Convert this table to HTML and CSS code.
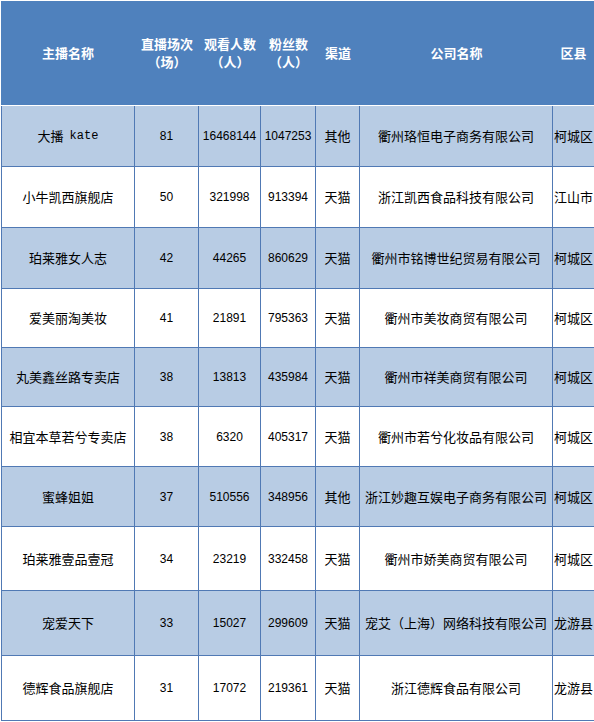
FILE: index.html
```html
<!DOCTYPE html>
<html lang="zh">
<head>
<meta charset="utf-8">
<title>主播榜单</title>
<link rel="stylesheet" href="styles.css">
</head>
<body>
<div class="sheet">
  <div class="row head">
    <div class="cell">主播名称</div>
    <div class="cell">直播场次<br>（场）</div>
    <div class="cell">观看人数<br>（人）</div>
    <div class="cell">粉丝数<br>（人）</div>
    <div class="cell">渠道</div>
    <div class="cell">公司名称</div>
    <div class="cell">区县</div>
  </div>
  <div class="row band h61">
    <div class="cell">大播<span class="latin">kate</span></div>
    <div class="cell num">81</div>
    <div class="cell num">16468144</div>
    <div class="cell num">1047253</div>
    <div class="cell">其他</div>
    <div class="cell">衢州珞恒电子商务有限公司</div>
    <div class="cell">柯城区</div>
  </div>
  <div class="row h61">
    <div class="cell">小牛凯西旗舰店</div>
    <div class="cell num">50</div>
    <div class="cell num">321998</div>
    <div class="cell num">913394</div>
    <div class="cell">天猫</div>
    <div class="cell">浙江凯西食品科技有限公司</div>
    <div class="cell">江山市</div>
  </div>
  <div class="row band h61">
    <div class="cell">珀莱雅女人志</div>
    <div class="cell num">42</div>
    <div class="cell num">44265</div>
    <div class="cell num">860629</div>
    <div class="cell">天猫</div>
    <div class="cell">衢州市铭博世纪贸易有限公司</div>
    <div class="cell">柯城区</div>
  </div>
  <div class="row h59">
    <div class="cell">爱美丽淘美妆</div>
    <div class="cell num">41</div>
    <div class="cell num">21891</div>
    <div class="cell num">795363</div>
    <div class="cell">天猫</div>
    <div class="cell">衢州市美妆商贸有限公司</div>
    <div class="cell">柯城区</div>
  </div>
  <div class="row band h59">
    <div class="cell">丸美鑫丝路专卖店</div>
    <div class="cell num">38</div>
    <div class="cell num">13813</div>
    <div class="cell num">435984</div>
    <div class="cell">天猫</div>
    <div class="cell">衢州市祥美商贸有限公司</div>
    <div class="cell">柯城区</div>
  </div>
  <div class="row h60">
    <div class="cell">相宜本草若兮专卖店</div>
    <div class="cell num">38</div>
    <div class="cell num">6320</div>
    <div class="cell num">405317</div>
    <div class="cell">天猫</div>
    <div class="cell">衢州市若兮化妆品有限公司</div>
    <div class="cell">柯城区</div>
  </div>
  <div class="row band h60">
    <div class="cell">蜜蜂姐姐</div>
    <div class="cell num">37</div>
    <div class="cell num">510556</div>
    <div class="cell num">348956</div>
    <div class="cell">其他</div>
    <div class="cell">浙江妙趣互娱电子商务有限公司</div>
    <div class="cell">柯城区</div>
  </div>
  <div class="row h64">
    <div class="cell">珀莱雅壹品壹冠</div>
    <div class="cell num">34</div>
    <div class="cell num">23219</div>
    <div class="cell num">332458</div>
    <div class="cell">天猫</div>
    <div class="cell">衢州市娇美商贸有限公司</div>
    <div class="cell">柯城区</div>
  </div>
  <div class="row band h65">
    <div class="cell">宠爱天下</div>
    <div class="cell num">33</div>
    <div class="cell num">15027</div>
    <div class="cell num">299609</div>
    <div class="cell">天猫</div>
    <div class="cell">宠艾（上海）网络科技有限公司</div>
    <div class="cell">龙游县</div>
  </div>
  <div class="row h65">
    <div class="cell">德辉食品旗舰店</div>
    <div class="cell num">31</div>
    <div class="cell num">17072</div>
    <div class="cell num">219361</div>
    <div class="cell">天猫</div>
    <div class="cell">浙江德辉食品有限公司</div>
    <div class="cell">龙游县</div>
  </div>
</div>
</body>
</html>
```

FILE: styles.css
```css
html, body {
  margin: 0;
  padding: 0;
  background: #ffffff;
}

body {
  padding: 1px 0 0 1px;
  font-family: "Noto Sans CJK SC", "Liberation Sans", sans-serif;
  font-size: 13px;
  color: #000000;
}

.sheet {
  width: 593px;
  display: flex;
  flex-direction: column;
}

.row {
  display: grid;
  grid-template-columns: 134px 64px 62px 55px 44px 193px 41px;
  box-sizing: border-box;
  border-bottom: 1px solid #5079b4;
}

.cell {
  box-sizing: border-box;
  display: flex;
  align-items: center;
  justify-content: center;
  text-align: center;
  white-space: nowrap;
  border-right: 1px solid #5079b4;
  line-height: 18px;
}

.row .cell:first-child {
  border-left: 1px solid #5079b4;
}

.row .cell:last-child {
  border-right: none;
}

.head {
  height: 105px;
  background: #4f81bd;
  border-bottom: 1px solid #ffffff;
}

.head .cell,
.head .cell:first-child {
  border: none;
  color: #ffffff;
  font-weight: bold;
  font-size: 13px;
}

.band {
  background: #b8cce4;
}

.num {
  font-family: "Liberation Sans", sans-serif;
  font-size: 12px;
}

.latin {
  font-family: "Liberation Mono", monospace;
  font-size: 12px;
  margin-left: 6px;
}

.h59 { height: 59px; }
.h60 { height: 60px; }
.h61 { height: 61px; }
.h64 { height: 64px; }
.h65 { height: 65px; }
```
